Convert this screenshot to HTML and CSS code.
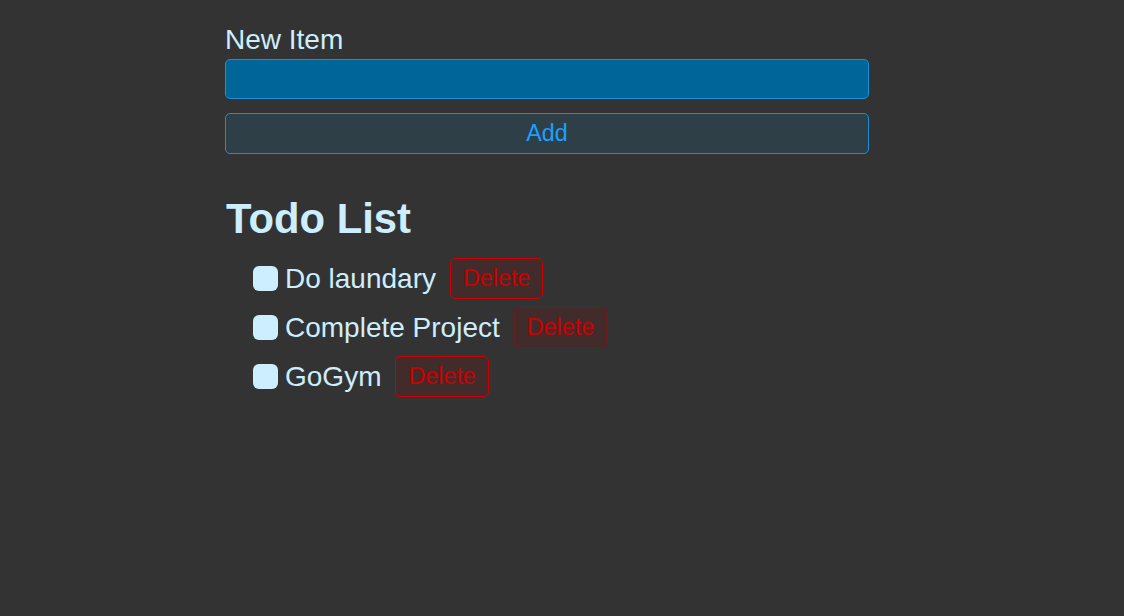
FILE: index.html
```html
<!DOCTYPE html>
<html>
<head>
<meta charset="utf-8">
<link rel="stylesheet" href="styles.css">
</head>
<body>
<div class="app">
  <form class="new-item-form">
    <div class="form-row">
      <label class="label" for="item">New Item</label>
      <input class="input" type="text" id="item">
    </div>
    <button class="btn add" type="button">Add</button>
  </form>
  <h1 class="header">Todo List</h1>
  <ul class="list">
    <li class="item"><label class="item-label"><span class="check"></span>Do laundary</label><button class="btn danger" type="button">Delete</button></li>
    <li class="item"><label class="item-label"><span class="check"></span>Complete Project</label><button class="btn danger dim" type="button">Delete</button></li>
    <li class="item"><label class="item-label"><span class="check"></span>GoGym</label><button class="btn danger" type="button">Delete</button></li>
  </ul>
</div>
</body>
</html>
```
FILE: styles.css
```css
* { box-sizing: border-box; }
html, body { margin: 0; padding: 0; }
body {
  background: #333333;
  color: #cdeeff;
  font-family: "Liberation Sans", Arial, sans-serif;
  height: 616px;
}
.app {
  width: 644px;
  padding-top: 24px;
  margin-left: 225px;
}
.new-item-form {
  display: flex;
  flex-direction: column;
  gap: 14px;
}
.form-row {
  display: flex;
  flex-direction: column;
  gap: 4px;
}
.label {
  font-size: 28px;
  line-height: 31px;
  color: #cdeeff;
}
.input {
  height: 40px;
  background: #006699;
  border: 1px solid #1a8fd6;
  border-radius: 5px;
  outline: none;
  color: #cdeeff;
  font-size: 23px;
  font-family: inherit;
  padding: 0 10px;
}
.btn {
  font-family: inherit;
  font-size: 23.3px;
  border-radius: 5px;
  cursor: pointer;
  line-height: 1;
}
.add {
  height: 41px;
  background: #2f3f48;
  color: #1aa0ff;
  border: 1px solid #1a8fd6;
}
.header {
  margin: 41px 0 16px 1px;
  font-size: 41.8px;
  line-height: 47px;
  font-weight: bold;
  color: #cdeeff;
}
.list {
  list-style: none;
  margin: 0;
  padding: 0 0 0 28px;
  display: flex;
  flex-direction: column;
  gap: 8px;
}
.item {
  display: flex;
  align-items: center;
  gap: 14px;
  height: 41px;
}
.item-label {
  display: flex;
  align-items: center;
  gap: 7px;
  font-size: 28px;
  line-height: 31px;
  color: #cdeeff;
}
.check {
  width: 25px;
  height: 25px;
  border-radius: 6px;
  background: #cdeeff;
  display: inline-block;
}
.danger {
  height: 41px;
  padding: 0 12px;
  background: #422b2b;
  color: #cc0000;
  border: 1px solid #cc0000;
}
.danger.dim {
  border-color: #6e1c1c;
}
```
